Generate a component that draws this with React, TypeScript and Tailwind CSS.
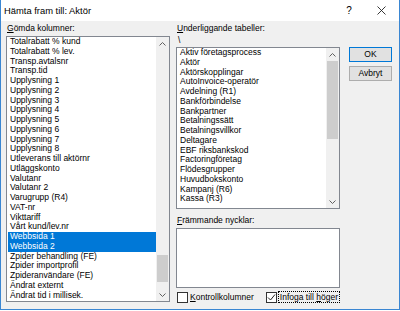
import React from 'react';

const hiddenColumns = [
  'Totalrabatt % kund',
  'Totalrabatt % lev.',
  'Transp.avtalsnr',
  'Transp.tid',
  'Upplysning 1',
  'Upplysning 2',
  'Upplysning 3',
  'Upplysning 4',
  'Upplysning 5',
  'Upplysning 6',
  'Upplysning 7',
  'Upplysning 8',
  'Utleverans till aktörnr',
  'Utläggskonto',
  'Valutanr',
  'Valutanr 2',
  'Varugrupp (R4)',
  'VAT-nr',
  'Vikttariff',
  'Vårt kund/lev.nr',
  'Webbsida 1',
  'Webbsida 2',
  'Zpider behandling (FE)',
  'Zpider importprofil',
  'Zpideranvändare (FE)',
  'Ändrat externt',
  'Ändrat tid i millisek.',
];

const selected = ['Webbsida 1', 'Webbsida 2'];

const tables = [
  'Aktiv företagsprocess',
  'Aktör',
  'Aktörskopplingar',
  'AutoInvoice-operatör',
  'Avdelning (R1)',
  'Bankförbindelse',
  'Bankpartner',
  'Betalningssätt',
  'Betalningsvillkor',
  'Deltagare',
  'EBF riksbankskod',
  'Factoringföretag',
  'Flödesgrupper',
  'Huvudbokskonto',
  'Kampanj (R6)',
  'Kassa (R3)',
];

function Chevron({ up }: { up?: boolean }) {
  return (
    <svg width="7" height="4" viewBox="0 0 7 4" className="block">
      <polyline
        points={up ? '0.5,3.5 3.5,0.5 6.5,3.5' : '0.5,0.5 3.5,3.5 6.5,0.5'}
        fill="none"
        stroke="#606060"
        strokeWidth="1"
      />
    </svg>
  );
}

function ScrollBar({ thumbTop, thumbHeight }: { thumbTop: number; thumbHeight: number }) {
  return (
    <div className="flex flex-col w-[13px] h-full bg-[#f0f0f0]">
      <div className="h-[13px] flex items-center justify-center">
        <Chevron up />
      </div>
      <div className="flex-1 relative">
        <div
          className="absolute left-[1px] right-[1px] bg-[#cdcdcd]"
          style={{ top: thumbTop, height: thumbHeight }}
        />
      </div>
      <div className="h-[13px] flex items-center justify-center">
        <Chevron />
      </div>
    </div>
  );
}

function Check({ checked }: { checked?: boolean }) {
  return (
    <div className="w-[11px] h-[11px] shrink-0 border border-[#333] bg-white flex items-center justify-center">
      {checked && (
        <svg width="9" height="9" viewBox="0 0 9 9">
          <polyline points="1,4.5 3.5,7 8,1.5" fill="none" stroke="#222" strokeWidth="1" />
        </svg>
      )}
    </div>
  );
}

export default function App() {
  return (
    <div
      className="w-[400px] h-[311px] bg-white text-black"
      style={{ fontFamily: '"Liberation Sans", Arial, sans-serif' }}
    >
      <div className="w-[400px] h-[310px] flex flex-col border-l border-r border-b border-[#3a86d2]">
        {/* title bar */}
        <div className="h-[21px] bg-white flex items-center pl-[3px]">
          <span className="text-[9.4px] leading-[12px] flex-1">Hämta fram till: Aktör</span>
          <span className="text-[10px] w-[14px] text-center mr-[21px]">?</span>
          <svg width="9" height="9" viewBox="0 0 9 9" className="mr-[13px]">
            <path d="M0.5 0.5 L8.5 8.5 M8.5 0.5 L0.5 8.5" stroke="#222" strokeWidth="0.9" />
          </svg>
        </div>

        {/* body */}
        <div className="flex-1 bg-[#f0f0f0] flex pl-[5px] text-[8.5px] whitespace-nowrap">
          {/* left column */}
          <div className="w-[164px] flex flex-col">
            <div className="h-[15px] leading-[15px] pl-[1px]">
              <span className="underline">G</span>ömda kolumner:
            </div>
            <div className="h-[266px] border border-[#828790] bg-white flex">
              <div className="flex-1 flex flex-col pl-[1px] overflow-hidden">
                {hiddenColumns.map((c) => (
                  <div
                    key={c}
                    className={`h-[9.75px] leading-[9.75px] pl-[2px] ${
                      selected.includes(c) ? 'bg-[#0078d7] text-white' : ''
                    }`}
                  >
                    {c}
                  </div>
                ))}
              </div>
              <ScrollBar thumbTop={205} thumbHeight={27} />
            </div>
          </div>

          {/* right column */}
          <div className="w-[164px] ml-[6px] flex flex-col">
            <div className="h-[15px] leading-[15px] pl-[1px]">
              <span className="underline">U</span>nderliggande tabeller:
            </div>
            <div className="h-[11px] leading-[9px] pl-[2px]">\</div>
            <div className="h-[162px] border border-[#828790] bg-white flex">
              <div className="flex-1 flex flex-col pl-[1px] overflow-hidden">
                {tables.map((t) => (
                  <div key={t} className="h-[9.75px] leading-[9.75px] pl-[2px]">
                    {t}
                  </div>
                ))}
              </div>
              <ScrollBar thumbTop={0} thumbHeight={78} />
            </div>
            <div className="h-[19px] flex items-end pb-[2px] pl-[1px]">
              <span className="leading-[11px]">
                <span className="underline">F</span>rämmande nycklar:
              </span>
            </div>
            <div className="h-[60px] border border-[#828790] bg-white" />
            <div className="h-[18px] flex items-center pl-[1px]">
              <Check />
              <span className="ml-[2px] w-[85px]">
                <span className="underline">K</span>ontrollkolumner
              </span>
              <Check checked />
              <span className="ml-[1px] border border-dotted border-black leading-[10px] px-[1px]">
                Infoga till <span className="underline">h</span>öger
              </span>
            </div>
          </div>

          {/* buttons */}
          <div className="w-[43px] ml-[9px] flex flex-col gap-[4px] pt-[26px]">
            <div className="h-[15px] border border-[#0078d7] bg-[#e1e1e1] flex items-center justify-center">
              OK
            </div>
            <div className="h-[15px] border border-[#adadad] bg-[#e1e1e1] flex items-center justify-center">
              Avbryt
            </div>
          </div>
        </div>
      </div>
    </div>
  );
}
